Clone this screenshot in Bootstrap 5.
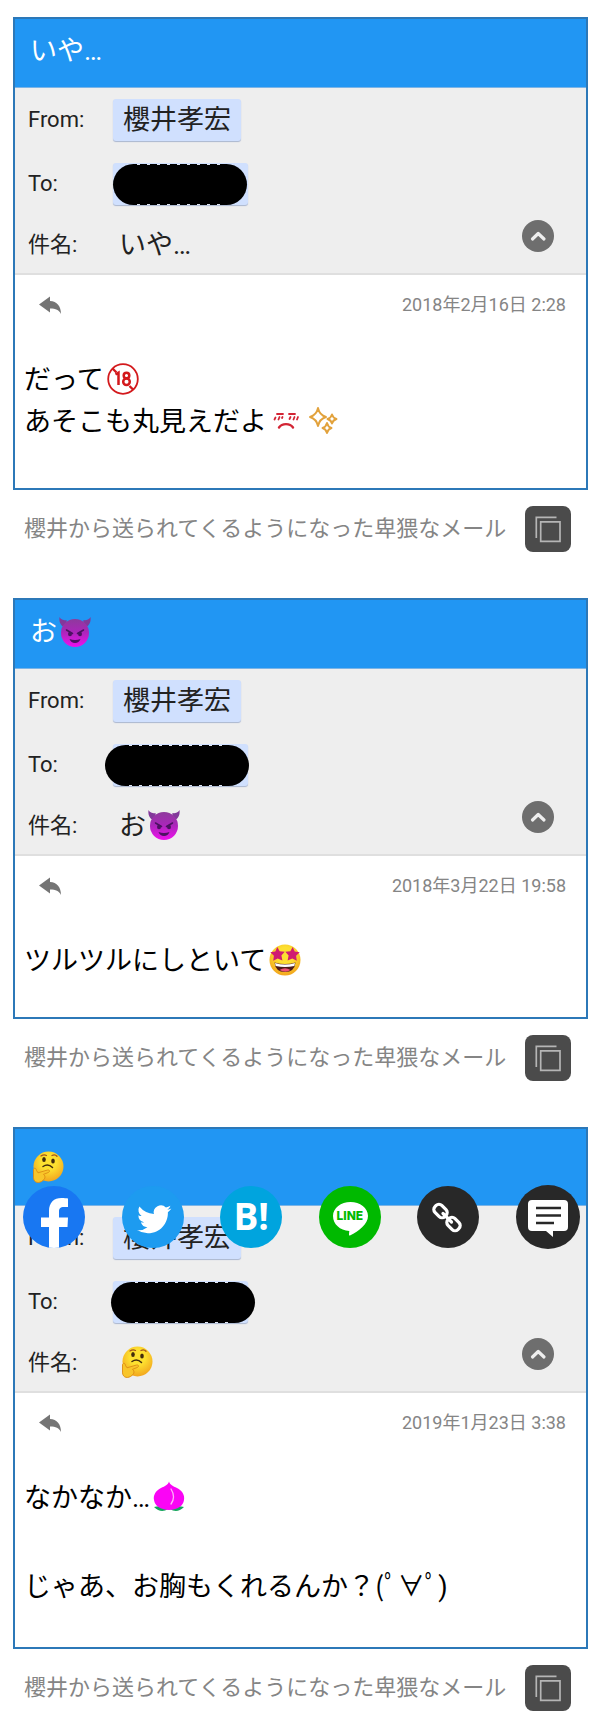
<!DOCTYPE html>
<html lang="ja">
<head>
<meta charset="utf-8">
<meta name="viewport" content="width=device-width, initial-scale=1">
<title>メール</title>
<link href="https://cdn.jsdelivr.net/npm/bootstrap@5.3.0/dist/css/bootstrap.min.css" rel="stylesheet">
<style>
body { font-family: Roboto, "Noto Sans CJK JP", sans-serif; font-weight: 400; color: #222; background: #fff; }
.page { padding: 17px 12px 16px 13px; }
.mail { border: 2px solid #2c78b8; border-radius: 0; }
.mail-title { height: 69px; padding: 0 15px 4px; background: #2196f3; color: #fff; font-size: 27px; line-height: 40px; font-weight: 400; border-bottom: 1px solid #7bb4e6; }
.mail-title.tall { height: 77px; padding-bottom: 0; }
.mail-head { background: #eee; border-bottom: 2px solid #dfdfdf; padding-left: 13px; }
.field { height: 64px; }
.field-last { height: 57px; }
.field dt { width: 85px; font-size: 22px; line-height: 32px; font-weight: 400; }
.field dd { font-size: 27px; line-height: 42px; }
.subject { padding-left: 6px; }
.chip { height: 42px; padding: 0 10px; background: #d0e0fe; border-radius: 3px; box-shadow: 0 1px 1px #a9b6cf; }
.chip-hidden { width: 135px; }
.redact { position: absolute; top: 1px; height: 41px; left: 0; width: 134px; border-radius: 21px; background: #000; }
.redact::before, .redact::after { content: ""; position: absolute; left: 24px; right: 20px; height: 1px; background: repeating-linear-gradient(90deg, #dfe5f2 0 3px, transparent 3px 10px); }
.redact::before { top: 0; }
.redact::after { bottom: 0; }
.redact.wide { left: -8px; width: 144px; }
.redact.shifted { left: -2px; width: 144px; }
.fold { width: 32px; height: 32px; margin: 4px 32px 0 0; border: 0; border-radius: 50%; background: #6e6e6e; }
.meta { height: 59px; padding: 0 20px 0 24px; font-size: 18px; color: #858585; }
.reply { border: 0; background: none; }
.mail-text { padding: 25px 9px 45px; font-size: 27px; line-height: 42px; color: #000; }
.mail-text p { margin: 0 0 47px; }
.mail-text p:last-child { margin: 0; }
.short { padding-bottom: 35px; }
.medium { padding-bottom: 39px; }
.emoji { width: 32px; height: 32px; margin: 0 2px 0 3px; vertical-align: -6px; }
.mail-title .emoji:first-child, .subject .emoji:first-child { margin-left: 2px; }
.caption-row { padding: 16px 17px 46px 11px; font-size: 22px; line-height: 32px; color: #858585; }
.caption-row.last { padding-bottom: 0; }
.caption-row p { white-space: nowrap; }
.copy { width: 46px; height: 46px; border: 0; border-radius: 8px; background: #4b4b4b; }
.share { position: absolute; top: 56px; left: 8px; right: 6px; z-index: 2; }
.share a { width: 62px; height: 62px; border-radius: 50%; overflow: hidden; text-decoration: none; color: #fff; }
.share .comment { width: 64px; height: 64px; }
.hatena { background: #00a4de; font: 700 37px/60px "Open Sans", sans-serif; text-align: center; }
.line-word { position: absolute; inset: 0; font: 800 12px/60px Inter, sans-serif; color: #00b900; text-align: center; }
</style>
</head>
<body>
<svg class="position-absolute" width="0" height="0" aria-hidden="true">
  <defs>
    <linearGradient id="g-devil" x1="0" y1="0" x2="0" y2="1"><stop offset="0" stop-color="#8e3a9c"/><stop offset=".45" stop-color="#a927b8"/><stop offset="1" stop-color="#ee10ee"/></linearGradient>
    <radialGradient id="g-face" cx=".5" cy=".35" r=".65"><stop offset=".4" stop-color="#fde030"/><stop offset="1" stop-color="#f2a51e"/></radialGradient>
  </defs>
  <symbol id="devil" viewBox="0 0 32 32">
    <path d="M.5 1C2 4 5 4 8 4.500L5 11C1 9 0 5 .5 1zM31.500 1C30 4 27 4 24 4.500L27 11C31 9 32 5 31.500 1z" fill="#82389a"/>
    <circle cx="16" cy="17" r="14" fill="url(#g-devil)"/>
    <path d="M7.500 14l6 3.500M24.500 14l-6 3.500" stroke="#4b1261" stroke-width="1.500" stroke-linecap="round"/>
    <ellipse cx="11" cy="18" rx="2" ry="2.200" fill="#4b1261"/><ellipse cx="21" cy="18" rx="2" ry="2.200" fill="#4b1261"/>
    <path d="M10.500 23q5.500 2 11 0-1.500 4-5.500 4t-5.500-4z" fill="#4b1261"/>
  </symbol>
  <symbol id="think" viewBox="0 0 32 32">
    <circle cx="16.500" cy="15.500" r="15" fill="url(#g-face)"/>
    <path d="M9 5q3-2 5.500-.5M20 4.500q3-1.500 5 .8" fill="none" stroke="#a3541c" stroke-width="1.300" stroke-linecap="round"/>
    <ellipse cx="12" cy="8.500" rx="1.800" ry="2.600" fill="#422b0d"/><ellipse cx="21" cy="10" rx="1.800" ry="2.600" fill="#422b0d"/>
    <path d="M11 15.500q5-3.500 9.500 1" fill="none" stroke="#422b0d" stroke-width="1.500" stroke-linecap="round"/>
    <path d="M1.500 18.500c1-2 2.500-1.500 3 1l1.500 2.300 9.500-2.800c2.500-.5 2.800 1.800.5 2.600l-4.500 1.800c2 1.500 2 4-.5 6-4 3.500-9 2.500-9.500-2.500z" fill="#f8c52a" stroke="#dc8b13" stroke-width=".9"/>
  </symbol>
  <symbol id="starry" viewBox="0 0 32 32">
    <circle cx="16" cy="16" r="15.500" fill="url(#g-face)"/>
    <path id="eye" d="M8.300 3l2.400 4.300 5 .5-3.300 3.700 1 5-4.700-2-4.500 2.300.7-5L1.300 8.300l5-.8z" fill="#d01b72"/>
    <use href="#eye" transform="matrix(-1 0 0 1 32 0)"/>
    <path d="M5.500 18.500q10.500 3 21 0-1 9.500-10.500 9.500T5.500 18.500z" fill="#4c1d18"/>
    <path d="M6 19q10 3 20 0l-.7 3q-9.300 2-18.600 0z" fill="#fff"/>
    <path d="M10.500 26q5.500-3.500 11 0-5 3.500-11 0z" fill="#ee5375"/>
  </symbol>
  <symbol id="peach" viewBox="0 0 32 32">
    <path d="M1 26q8-2 14 2-7 5-14-2zM31 26q-8-2-14 2 7 5 14-2z" fill="#16a55c"/>
    <path d="M16 .5c1 3.500 4 4.500 8 6.500 5 2.500 8 7 7 12-1 6-6 9.500-15 10C7 28.500 2 25 1 19 0 14 3 9.500 8 7c4-2 7-3 8-6.500z" fill="#fa05f5"/>
    <path d="M18 8q5 8 0 15" fill="none" stroke="#fbb5f7" stroke-width="1.300" stroke-linecap="round"/>
  </symbol>
  <symbol id="adult" viewBox="0 0 32 32">
    <g fill="none" stroke="#d3191c" stroke-width="1.800"><circle cx="16" cy="16" r="14.800"/><path d="M5.500 5.500l4 4M22.500 23l4 4" stroke-width="2.400"/></g>
    <g fill="none" stroke="#d3191c" stroke-width="2.500"><path d="M8.500 11.500l3-1.800V22"/><circle cx="19.500" cy="12.500" r="2.800"/><circle cx="19.500" cy="18.800" r="3.300"/></g>
  </symbol>
  <symbol id="cross" viewBox="0 0 32 32">
    <g fill="none" stroke="#d32535" stroke-width="1.800" stroke-linecap="round"><path d="M7 9h6M19 9h6M5.500 12.500l-1 2M9.500 12l-1 2.500M12.500 12l-.5 1M20.500 12l-1 2M24.500 12l-1 2.500M28 12l-1 2.500"/><path d="M9 22.500c3-4.500 11-4.500 14 0" stroke-width="2.400"/></g>
  </symbol>
  <symbol id="sparkle" viewBox="0 0 32 32">
    <g fill="none" stroke="#e2a23c" stroke-width="1.900" stroke-linejoin="round"><path d="M11 3q1.500 7 8 9-6.500 2-8 9-1.500-7-8-9 6.500-2 8-9zM25 9.500q1 3.500 4.500 4.500-3.500 1-4.500 4.500-1-3.500-4.500-4.500 3.500-1 4.500-4.500zM20 18q1 4 4.500 5-3.500 1-4.500 5-1-4-4.500-5 3.500-1 4.500-5z"/></g>
  </symbol>
  <symbol id="i-up" viewBox="0 0 32 32"><path d="M10.500 19l5.700-5.500L22 19" fill="none" stroke="#eee" stroke-width="3.200" stroke-linecap="round" stroke-linejoin="round"/></symbol>
  <symbol id="i-reply" viewBox="0 0 22 18"><path d="M0 8.500L11 .5V5c7 .5 11 5 11 13-2-4-5-5.500-11-5.500V16.500z" fill="#757575"/></symbol>
  <symbol id="i-copy" viewBox="0 0 46 46"><g fill="none" stroke="#b5b5b5" stroke-width="1.700"><path d="M11.300 32V11.300H31.500"/><path d="M15.700 15.900H35V35.300H15.700z"/></g></symbol>
</svg>

<main class="page">
  <section>
    <article class="card mail">
      <h2 class="mail-title d-flex align-items-center m-0">いや…</h2>
      <dl class="mail-head m-0">
        <div class="field d-flex align-items-center"><dt>From:</dt><dd class="chip m-0">櫻井孝宏</dd></div>
        <div class="field d-flex align-items-center"><dt>To:</dt><dd class="chip chip-hidden m-0 position-relative"><span class="redact"></span></dd></div>
        <div class="field field-last d-flex align-items-center"><dt>件名:</dt><dd class="subject m-0">いや…</dd>
          <button class="fold p-0 ms-auto align-self-start" type="button" aria-label="閉じる"><svg class="d-block" width="32" height="32"><use href="#i-up"/></svg></button></div>
      </dl>
      <div class="meta d-flex align-items-center justify-content-between">
        <button class="reply p-0" type="button" aria-label="返信"><svg class="d-block" width="22" height="18"><use href="#i-reply"/></svg></button>
        <time datetime="2018-02-16T02:28">2018年2月16日 2:28</time>
      </div>
      <div class="mail-text"><p>だって<svg class="emoji"><use href="#adult"/></svg><br>あそこも丸見えだよ<svg class="emoji"><use href="#cross"/></svg><svg class="emoji"><use href="#sparkle"/></svg></p></div>
    </article>
    <div class="caption-row d-flex align-items-center justify-content-between">
      <p class="m-0">櫻井から送られてくるようになった卑猥なメール</p>
      <button class="copy p-0" type="button" aria-label="拡大"><svg class="d-block" width="46" height="46"><use href="#i-copy"/></svg></button>
    </div>
  </section>

  <section>
    <article class="card mail">
      <h2 class="mail-title d-flex align-items-center m-0">お<svg class="emoji"><use href="#devil"/></svg></h2>
      <dl class="mail-head m-0">
        <div class="field d-flex align-items-center"><dt>From:</dt><dd class="chip m-0">櫻井孝宏</dd></div>
        <div class="field d-flex align-items-center"><dt>To:</dt><dd class="chip chip-hidden m-0 position-relative"><span class="redact wide"></span></dd></div>
        <div class="field field-last d-flex align-items-center"><dt>件名:</dt><dd class="subject m-0">お<svg class="emoji"><use href="#devil"/></svg></dd>
          <button class="fold p-0 ms-auto align-self-start" type="button" aria-label="閉じる"><svg class="d-block" width="32" height="32"><use href="#i-up"/></svg></button></div>
      </dl>
      <div class="meta d-flex align-items-center justify-content-between">
        <button class="reply p-0" type="button" aria-label="返信"><svg class="d-block" width="22" height="18"><use href="#i-reply"/></svg></button>
        <time datetime="2018-03-22T19:58">2018年3月22日 19:58</time>
      </div>
      <div class="mail-text short"><p>ツルツルにしといて<svg class="emoji"><use href="#starry"/></svg></p></div>
    </article>
    <div class="caption-row d-flex align-items-center justify-content-between">
      <p class="m-0">櫻井から送られてくるようになった卑猥なメール</p>
      <button class="copy p-0" type="button" aria-label="拡大"><svg class="d-block" width="46" height="46"><use href="#i-copy"/></svg></button>
    </div>
  </section>

  <section>
    <article class="card mail">
      <h2 class="mail-title tall d-flex align-items-center m-0"><svg class="emoji"><use href="#think"/></svg></h2>
      <nav class="share d-flex align-items-center justify-content-between" aria-label="シェア">
        <a href="#facebook" aria-label="Facebook"><svg class="d-block" width="62" height="62" viewBox="0 0 62 62"><path fill="#1877f2" d="M0 0h62v62H0z"/><path fill="#fff" d="M26 62V41h-8v-9.500h8V25c0-8.500 5-13 12.500-13 2.500 0 5 .3 6.500.5V21h-4c-4 0-5 2-5 4.500v6h9L44.500 41H36v21z"/></svg></a>
        <a href="#twitter" aria-label="Twitter"><svg class="d-block" width="62" height="62" viewBox="0 0 62 62"><path fill="#1d9bf0" d="M0 0h62v62H0z"/><path fill="#fff" transform="translate(15 15) scale(2.150)" d="M5.026 15c6.038 0 9.341-5.003 9.341-9.334 0-.14 0-.282-.006-.422A6.685 6.685 0 0 0 16 3.542a6.658 6.658 0 0 1-1.889.518 3.301 3.301 0 0 0 1.447-1.817 6.533 6.533 0 0 1-2.087.793A3.286 3.286 0 0 0 7.875 6.030a9.325 9.325 0 0 1-6.767-3.429 3.289 3.289 0 0 0 1.018 4.382A3.323 3.323 0 0 1 .640 6.575v.045a3.288 3.288 0 0 0 2.632 3.218 3.203 3.203 0 0 1-.865.115 3.230 3.230 0 0 1-.614-.057 3.283 3.283 0 0 0 3.067 2.277A6.588 6.588 0 0 1 .780 13.580a6.320 6.320 0 0 1-.780-.045A9.344 9.344 0 0 0 5.026 15z"/></svg></a>
        <a class="hatena" href="#hatena">B!</a>
        <a class="position-relative" href="#line"><svg class="d-block" width="62" height="62" viewBox="0 0 62 62"><path fill="#00b900" d="M0 0h62v62H0z"/><path fill="#fff" d="M31.500 16C41 16 49 22 49 30c0 8-9 15-18 19.500-1.500.5-1-1-.7-4.500C21 44.500 14 38 14 30c0-8 8-14 17.500-14z"/></svg><span class="line-word">LINE</span></a>
        <a href="#link" aria-label="リンク"><svg class="d-block" width="62" height="62" viewBox="0 0 62 62"><path fill="#282828" d="M0 0h62v62H0z"/><g fill="none" stroke="#fff" stroke-width="3.200"><rect x="-7" y="-4.800" width="14" height="9.600" rx="4" transform="translate(23.500 25) rotate(45)" /><rect x="-7" y="-4.800" width="14" height="9.600" rx="4" transform="translate(36.500 38) rotate(45)"/><path d="M26 27.500l8.500 8.500" stroke-linecap="round"/></g></svg></a>
        <a class="comment" href="#comment" aria-label="コメント"><svg class="d-block" width="64" height="64" viewBox="0 0 64 64"><path fill="#282828" d="M0 0h64v64H0z"/><path fill="#fff" d="M16 15h32q4 0 4 4v23q0 4-4 4H37v6l-7-6H16q-4 0-4-4V19q0-4 4-4z"/><path d="M20 23h25M20 30.500h25M20 38h18" stroke="#282828" stroke-width="2.500"/></svg></a>
      </nav>
      <dl class="mail-head m-0">
        <div class="field d-flex align-items-center"><dt>From:</dt><dd class="chip m-0">櫻井孝宏</dd></div>
        <div class="field d-flex align-items-center"><dt>To:</dt><dd class="chip chip-hidden m-0 position-relative"><span class="redact shifted"></span></dd></div>
        <div class="field field-last d-flex align-items-center"><dt>件名:</dt><dd class="subject m-0"><svg class="emoji"><use href="#think"/></svg></dd>
          <button class="fold p-0 ms-auto align-self-start" type="button" aria-label="閉じる"><svg class="d-block" width="32" height="32"><use href="#i-up"/></svg></button></div>
      </dl>
      <div class="meta d-flex align-items-center justify-content-between">
        <button class="reply p-0" type="button" aria-label="返信"><svg class="d-block" width="22" height="18"><use href="#i-reply"/></svg></button>
        <time datetime="2019-01-23T03:38">2019年1月23日 3:38</time>
      </div>
      <div class="mail-text medium"><p>なかなか…<svg class="emoji"><use href="#peach"/></svg></p><p>じゃあ、お胸もくれるんか？(ﾟ∀ﾟ)</p></div>
    </article>
    <div class="caption-row last d-flex align-items-center justify-content-between">
      <p class="m-0">櫻井から送られてくるようになった卑猥なメール</p>
      <button class="copy p-0" type="button" aria-label="拡大"><svg class="d-block" width="46" height="46"><use href="#i-copy"/></svg></button>
    </div>
  </section>
</main>
<script src="https://cdn.jsdelivr.net/npm/bootstrap@5.3.0/dist/js/bootstrap.bundle.min.js"></script>
</body>
</html>
